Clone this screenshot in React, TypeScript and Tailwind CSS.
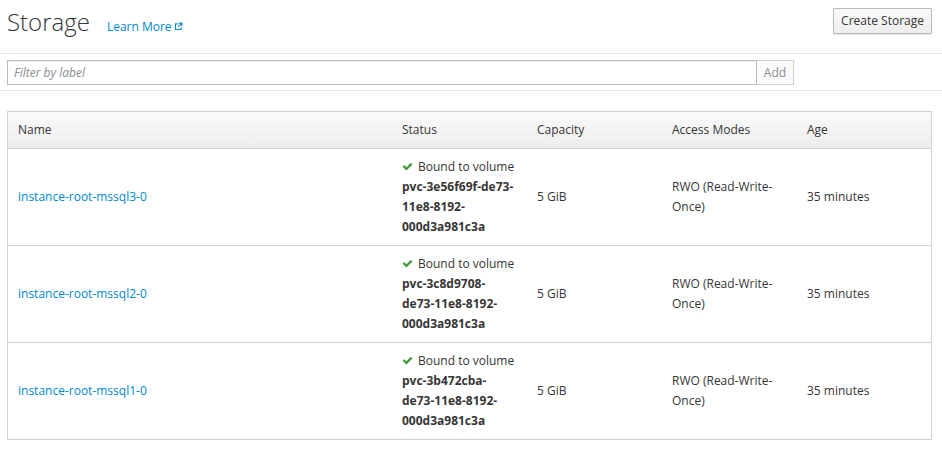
import React from 'react'

interface Claim {
  name: string
  volume: string[]
  capacity: string
  access: string[]
  age: string
}

const claims: Claim[] = [
  {
    name: 'instance-root-mssql3-0',
    volume: ['pvc-3e56f69f-de73-', '11e8-8192-', '000d3a981c3a'],
    capacity: '5 GiB',
    access: ['RWO (Read-Write-', 'Once)'],
    age: '35 minutes',
  },
  {
    name: 'instance-root-mssql2-0',
    volume: ['pvc-3c8d9708-', 'de73-11e8-8192-', '000d3a981c3a'],
    capacity: '5 GiB',
    access: ['RWO (Read-Write-', 'Once)'],
    age: '35 minutes',
  },
  {
    name: 'instance-root-mssql1-0',
    volume: ['pvc-3b472cba-', 'de73-11e8-8192-', '000d3a981c3a'],
    capacity: '5 GiB',
    access: ['RWO (Read-Write-', 'Once)'],
    age: '35 minutes',
  },
]

const Check = () => (
  <svg viewBox="0 0 1792 1792" className="inline-block h-[11px] w-[11px] mr-[5px] -mt-[2px] fill-[#3f9c35]">
    <path d="M1671 566q0 40-28 68l-724 724-136 136q-28 28-68 28t-68-28l-136-136-362-362q-28-28-28-68t28-68l136-136q28-28 68-28t68 28l294 295 656-657q28-28 68-28t68 28l136 136q28 28 28 68z" />
  </svg>
)

const ExternalLink = () => (
  <svg viewBox="0 0 12 12" className="inline-block h-[9px] w-[9px] ml-[2px] -mt-[2px]" fill="none" stroke="#0088ce" strokeWidth="1.4">
    <path d="M5 2.5H2v7.5h7.5V7" />
    <path d="M6.5 1.5h4v4M10.5 1.5L5.5 6.5" />
  </svg>
)

const App: React.FC = () => {
  return (
    <div className="min-h-[461px] w-[942px] bg-white text-[12px] text-[#363636]" style={{ fontFamily: '"Open Sans", sans-serif' }}>
      <div className="flex items-start justify-between pl-[7px] pr-[10px] pt-[8px] h-[53px]">
        <div className="flex items-baseline">
          <h1 className="text-[24px] font-light leading-[28px] text-[#363636]">Storage</h1>
          <a className="ml-[17px] text-[12px] text-[#0088ce]">
            Learn More
            <ExternalLink />
          </a>
        </div>
        <button className="h-[26px] px-[7px] border border-[#bbb] rounded-[1px] bg-gradient-to-b from-[#fafafa] to-[#ededed] text-[12px] text-[#363636] shadow-[0_1px_1px_rgba(0,0,0,0.1)]">
          Create Storage
        </button>
      </div>
      <div className="border-t border-[#e5e5e5] pl-[7px] pr-[10px] pt-[6px] pb-[5px] border-b">
        <div className="flex w-[787px]">
          <input
            placeholder="Filter by label"
            className="h-[25px] flex-1 border border-[#bbb] px-[6px] text-[12px] italic placeholder:text-[#8b8d8f] outline-none shadow-[inset_0_1px_1px_rgba(0,0,0,0.075)]"
          />
          <button className="h-[25px] w-[37px] border border-l-0 border-[#d1d1d1] bg-[#fafafa] text-[12px] text-[#8b8d8f]">Add</button>
        </div>
      </div>
      <div className="pl-[7px] pr-[10px] pt-[20px]">
        <div className="border border-[#d1d1d1]">
          <div className="grid grid-cols-[383px_135px_135px_135px_1fr] h-[37px] items-center bg-gradient-to-b from-[#fafafa] to-[#ededed] border-b border-[#d1d1d1] text-[12px] text-[#363636]">
            <div className="pl-[10px]">Name</div>
            <div className="pl-[11px]">Status</div>
            <div className="pl-[11px]">Capacity</div>
            <div className="pl-[11px]">Access Modes</div>
            <div className="pl-[11px]">Age</div>
          </div>
          {claims.map((c, i) => (
            <div
              key={c.name}
              className={`grid grid-cols-[383px_135px_135px_135px_1fr] items-center py-[8px] leading-[20px] ${i < claims.length - 1 ? 'border-b border-[#d1d1d1]' : ''}`}
            >
              <div className="pl-[10px]">
                <a className="text-[#0088ce]">{c.name}</a>
              </div>
              <div className="pl-[11px]">
                <div>
                  <Check />
                  Bound to volume
                </div>
                {c.volume.map((v) => (
                  <div key={v} className="font-bold">{v}</div>
                ))}
              </div>
              <div className="pl-[11px]">{c.capacity}</div>
              <div className="pl-[11px]">
                {c.access.map((a) => (
                  <div key={a}>{a}</div>
                ))}
              </div>
              <div className="pl-[11px]">{c.age}</div>
            </div>
          ))}
        </div>
      </div>
    </div>
  )
}

export default App
